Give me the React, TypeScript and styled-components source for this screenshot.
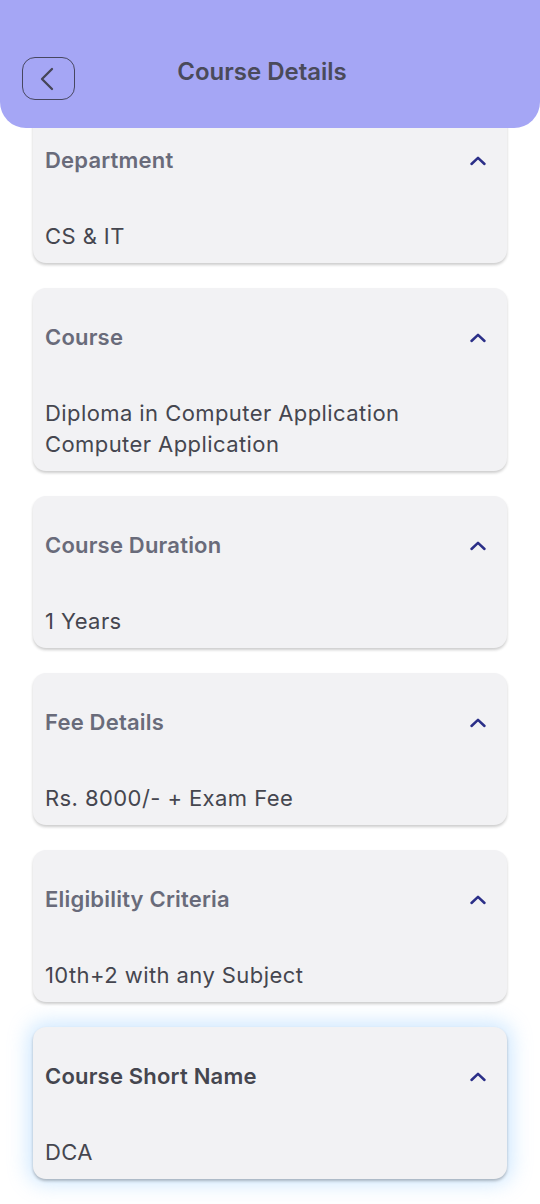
import * as React from 'react';
import styled, { createGlobalStyle } from 'styled-components';

type Detail = {
  title: string;
  lines: string[];
  focused?: boolean;
};

const details: Detail[] = [
  { title: 'Department', lines: ['CS & IT'] },
  { title: 'Course', lines: ['Diploma in Computer Application', 'Computer Application'] },
  { title: 'Course Duration', lines: ['1 Years'] },
  { title: 'Fee Details', lines: ['Rs. 8000/- + Exam Fee'] },
  { title: 'Eligibility Criteria', lines: ['10th+2 with any Subject'] },
  { title: 'Course Short Name', lines: ['DCA'], focused: true },
];

const GlobalStyle = createGlobalStyle`
  body {
    margin: 0;
    background: #ffffff;
    font-family: Inter, 'Noto Sans', sans-serif;
  }
`;

const Screen = styled.div`
  width: 540px;
  height: 1204px;
  overflow: hidden;
  background: #ffffff;
`;

const Header = styled.header`
  position: relative;
  z-index: 2;
  height: 128px;
  box-sizing: border-box;
  padding: 57px 22px 0;
  background: #a5a6f5;
  border-radius: 0 0 26px 26px;
  display: grid;
  grid-template-columns: 53px 1fr 69px;
  align-items: start;
`;

const BackButton = styled.button`
  width: 53px;
  height: 43px;
  box-sizing: border-box;
  border: 1.3px solid #474760;
  border-radius: 13px;
  background: transparent;
  display: flex;
  align-items: center;
  justify-content: center;
  padding: 0 4px 0 0;
`;

const Title = styled.h1`
  margin: 0;
  text-align: center;
  font-size: 24px;
  line-height: 30px;
  font-weight: 600;
  color: #4a4a5a;
`;

const List = styled.main`
  margin-top: -17px;
  display: flex;
  flex-direction: column;
  gap: 25px;
  padding: 0 33px;
`;

const Card = styled.section<{ $focused?: boolean }>`
  background: #f2f2f4;
  border-radius: 13px;
  padding: 36px 12px 11px;
  box-shadow: ${(p) =>
    p.$focused
      ? '0 2px 3px rgba(0,0,0,0.25), 0 0 20px 5px rgba(140,200,255,0.42)'
      : '0 2px 3px rgba(0,0,0,0.2)'};
`;

const CardHead = styled.div`
  display: flex;
  align-items: center;
  justify-content: space-between;
  height: 26px;
`;

const Label = styled.h2<{ $focused?: boolean }>`
  margin: 0;
  font-size: 22px;
  line-height: 26px;
  font-weight: 600;
  letter-spacing: 0.2px;
  color: ${(p) => (p.$focused ? '#45464f' : '#696b7a')};
`;

const Chevron = styled.svg`
  margin-right: 8px;
`;

const Value = styled.p`
  margin: 48px 0 0;
  font-size: 22px;
  line-height: 31px;
  font-weight: 400;
  letter-spacing: 0.42px;
  color: #45464f;
`;

export default function App() {
  return (
    <Screen>
      <GlobalStyle />
      <Header>
        <BackButton aria-label="Back">
          <svg width="22" height="24" viewBox="0 0 22 24" fill="none">
            <path d="M16 2 L6 12 L16 22" stroke="#454556" strokeWidth="2.3" strokeLinecap="round" strokeLinejoin="round" />
          </svg>
        </BackButton>
        <Title>Course Details</Title>
        <span />
      </Header>
      <List>
        {details.map((d) => (
          <Card key={d.title} $focused={d.focused}>
            <CardHead>
              <Label $focused={d.focused}>{d.title}</Label>
              <Chevron width="18" height="11" viewBox="0 0 18 11" fill="none">
                <path d="M2.5 9 L9 2.8 L15.5 9" stroke="#2b2f88" strokeWidth="2.5" strokeLinecap="round" strokeLinejoin="round" />
              </Chevron>
            </CardHead>
            <Value>
              {d.lines.map((l, i) => (
                <React.Fragment key={i}>
                  {i > 0 && <br />}
                  {l}
                </React.Fragment>
              ))}
            </Value>
          </Card>
        ))}
      </List>
    </Screen>
  );
}
